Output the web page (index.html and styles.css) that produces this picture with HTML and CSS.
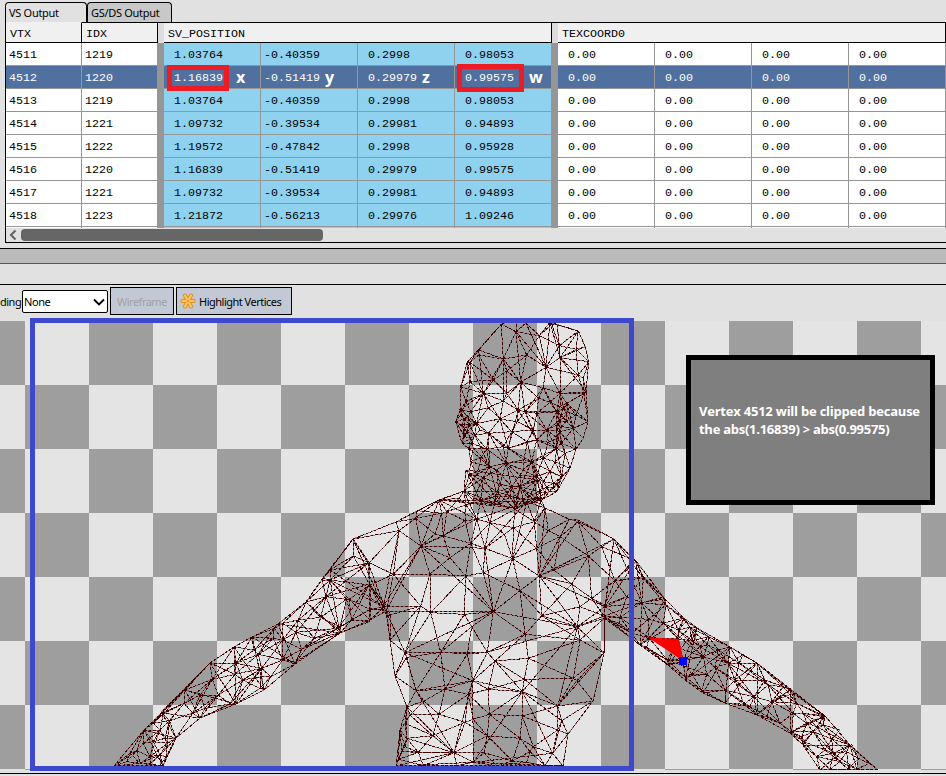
FILE: index.html
```html
<!DOCTYPE html>
<html lang="en">
<head>
<meta charset="utf-8">
<title>Mesh Output</title>
<link rel="stylesheet" href="styles.css">
</head>
<body>
<nav class="tabs"><div class="tab active">VS Output</div><div class="tab">GS/DS Output</div></nav>
<section class="table">
  <div class="row head">
    <div>VTX</div><div>IDX</div><i></i><div class="group">SV_POSITION</div><i></i><div class="group">TEXCOORD0</div>
  </div>
  <div id="rows"></div>
  <div class="scroll"><svg width="8" height="12" viewBox="0 0 8 12"><path d="M6.500 1.500 2 6l4.500 4.500" fill="none" stroke="#666" stroke-width="2.200"/></svg><div class="thumb"></div></div>
</section>
<div class="splitter"></div>
<div class="strip"></div>
<div class="toolbar">
  <span class="label">ding</span>
  <div class="select"><span>None</span><svg width="12" height="8" viewBox="0 0 12 8"><path d="M1 1.500 6 6.500 11 1.500" fill="none" stroke="#000" stroke-width="1.900"/></svg></div>
  <div class="button disabled"><span>Wireframe</span></div>
  <div class="button highlight">
    <svg width="16" height="16" viewBox="0 0 16 16"><g stroke="#df8c20" stroke-width="4" stroke-linecap="round"><path d="M2.300 8h11.400M5 2.500l6 11M11 2.500l-6 11"/></g><g stroke="#ffc65a" stroke-width="2.200" stroke-linecap="round"><path d="M2.300 8h11.400M5 2.500l6 11M11 2.500l-6 11"/></g><circle cx="8" cy="8" r="1.500" fill="#f3a22c"/></svg>
    <span>Highlight Vertices</span>
  </div>
</div>
<main class="viewport">
  <svg class="mesh" width="946" height="449" viewBox="0 321 946 449">
    <path id="shade" class="shade"/><path id="wire" class="wire"/>
    <path d="M648 637.500 679 639 683.500 661Z" fill="#f00"/><rect x="679" y="657" width="8" height="8" fill="#00f"/>
  </svg>
  <div class="frame"></div>
  <div class="note"><span>Vertex 4512 will be clipped because</span><br><span class="second">the abs(1.16839) &gt; abs(0.99575)</span></div>
</main>
<footer class="foot"></footer>
<script src="mesh.js"></script>
</body>
</html>
```
FILE: styles.css
```css
* { box-sizing: border-box; }
body { margin: 0; width: 946px; height: 776px; overflow: hidden; background: #e1e1e1; font: 11px/14px "Noto Sans", sans-serif; color: #000; display: flex; flex-direction: column; }
.tabs { height: 22px; flex: none; padding: 2px 0 0 5px; display: flex; position: relative; }
.tab { width: 82px; height: 21px; border: 1px solid #000; border-bottom: 0; border-radius: 4px 4px 0 0; padding: 3px 0 0 3px; white-space: nowrap; background: #e1e1e1; letter-spacing: -.3px; }
.tab + .tab { width: 85px; height: 20px; background: #c8c8c8; border-left-width: 1px; letter-spacing: -.3px; }
.table { height: 221px; flex: none; margin-left: 5px; border-left: 1px solid #000; border-bottom: 1px solid #000; overflow: hidden; font: 11.67px/24px "Liberation Mono", monospace; display: flex; flex-direction: column; background: #e1e1e1; }
.row { display: grid; grid-template-columns: 76px 76px 6px repeat(4, 97px) 6px repeat(4, 97px); grid-template-rows: 23px; height: 23px; flex: none; }
.row > div { border-right: 1px solid #969696; border-bottom: 1px solid #969696; padding-left: 3px; white-space: pre; background: #fff; position: relative; }
.row > i { background: #969696; }
.row > .pos { background: #8fd2ef; }
.row.selected > div { background: #5070a0; color: #fff; }
.row.head { height: 21px; grid-template-rows: 21px; }
.row.head > div { background: #f0f0f0; border-color: #000; border-top: 1px solid transparent; line-height: 22px; padding-left: 4px; }
.row.head > i { background: #dcdcdc; border-top: 1px solid #000; }
.row.head > div:nth-child(n+2) { border-top-color: #000; }
.row.head .group { grid-column: span 4; }
#rows { height: 185px; flex: none; overflow: hidden; }
.scroll { height: 14px; display: flex; gap: 4px; align-items: center; padding-left: 3px; }
.scroll svg { flex: none; }
.thumb { width: 302px; height: 12px; border-radius: 4px; background: #666; }
.mark { position: absolute; left: 3px; top: -1px; width: 62px; height: 26px; border: 5px solid #ed1c24; z-index: 1; }
.mark.wide { left: 2px; top: -2px; width: 67px; height: 28px; }
.axis { position: absolute; left: 72px; top: 0; font: bold 16px/22px "Open Sans", sans-serif; z-index: 1; }
.axis.y, .axis.z { left: 64px; }
.axis.w { left: 74px; }
.splitter { height: 16px; flex: none; margin-top: 5px; background: #bbb; border-top: 1px solid #000; border-bottom: 1px solid #555; }
.strip { height: 21px; flex: none; border-bottom: 1px solid #000; }
.toolbar { height: 36px; flex: none; display: flex; align-items: flex-start; padding-top: 2px; gap: 2px; }
.label { width: 20px; margin-top: 8px; letter-spacing: -.5px; }
.select { width: 86px; height: 23px; margin-top: 3px; border: 1px solid #000; border-radius: 2px; background: #fff; display: flex; align-items: center; justify-content: space-between; padding: 0 2px 0 1px; letter-spacing: -.4px; }
.button { height: 28px; border: 1px solid #000; background: #c3c9d4; display: flex; align-items: center; white-space: nowrap; }
.disabled { width: 64px; padding-left: 6px; color: #a0a0a0; letter-spacing: -.5px; }
.highlight { width: 116px; padding-left: 3px; gap: 3px; letter-spacing: -.5px; }
.highlight svg { flex: none; }
.button span { padding-top: 1px; }
.viewport { height: 449px; flex: none; position: relative; background: conic-gradient(#9e9e9e 25%, #e4e4e4 0 50%, #9e9e9e 0 75%, #e4e4e4 0) 25px 0 / 128px 128px; }
.mesh { display: block; }
.shade, .wire { fill: none; stroke-width: 1; shape-rendering: crispEdges; }
.shade { stroke: #705858; stroke-opacity: .75; }
.wire { stroke: #410000; stroke-dasharray: 2.500 2; }
.frame { position: absolute; left: 30px; top: -3px; width: 604px; height: 453px; border: 5px solid #3f48cc; z-index: 2; }
.note { position: absolute; left: 686px; top: 34px; width: 249px; height: 150px; border: 5px solid #000; background: #7f7f7f; color: #fff; padding: 42px 0 0 8px; font: bold 13px/18px "Open Sans", sans-serif; letter-spacing: -.22px; white-space: nowrap; }
.second { letter-spacing: -.27px; }
.foot { height: 6px; margin-top: 3px; border-top: 1px solid #000; }
```
FILE: mesh.js
```javascript
const vertices = [
  [4511, 1219, "1.03764", "-0.40359", "0.2998", "0.98053"],
  [4512, 1220, "1.16839", "-0.51419", "0.29979", "0.99575"],
  [4513, 1219, "1.03764", "-0.40359", "0.2998", "0.98053"],
  [4514, 1221, "1.09732", "-0.39534", "0.29981", "0.94893"],
  [4515, 1222, "1.19572", "-0.47842", "0.2998", "0.95928"],
  [4516, 1220, "1.16839", "-0.51419", "0.29979", "0.99575"],
  [4517, 1221, "1.09732", "-0.39534", "0.29981", "0.94893"],
  [4518, 1223, "1.21872", "-0.56213", "0.29976", "1.09246"]
];
const rowHtml = v => {
  const sel = v[0] === 4512;
  const pos = v.slice(2).map((t, k) => {
    const mark = sel && k === 0 ? '<b class="mark"></b>' : sel && k === 3 ? '<b class="mark wide"></b>' : "";
    const axis = sel ? `<span class="axis ${"xyzw"[k]}">${"xyzw"[k]}</span>` : "";
    return `<div class="pos">${t[0] === "-" ? t : " " + t}${mark}${axis}</div>`;
  }).join("");
  return `<div class="row${sel ? " selected" : ""}"><div>${v[0]}</div><div>${v[1]}</div><i></i>${pos}<i></i>${"<div> 0.00</div>".repeat(4)}</div>`;
};
document.getElementById("rows").innerHTML = vertices.map(rowHtml).join("") + '<div class="row"><div></div><div></div><i></i>' + '<div class="pos"></div>'.repeat(4) + "<i></i>" + "<div></div>".repeat(4) + "</div>";

// Each patch is stored as x,y pairs in thirds of a pixel from its origin.
const patch = (ox, oy, s) => s.trim().split(/\s+/).map(p => { const [x, y] = p.split(","); return [ox + x / 3, oy + y / 3]; });
const outline = s => s.trim().split(/\s+/).map(p => p.split(",").map(Number));

const headEdge = patch(440, 315, "184,28 228,14 258,24 330,22 352,30 415,48 436,95 446,140 438,232 444,320 430,370 408,402 390,460 350,530 310,552 330,580 250,600 75,600 0,555 72,528 88,480 92,440 86,400 66,385 47,320 60,285 62,215 82,142 116,105");
const headInner = patch(440, 315, `
228,50 258,24 335,28 298,62 116,120 90,142 190,132 260,120 358,92 408,103 318,157 360,128 200,168 90,200 160,195 242,202 310,218 415,180 430,190 432,236
360,235 130,235 200,235 78,260 145,278 190,258 235,285 290,295 296,250 330,262 380,265 350,290 382,290 408,300 440,320 180,312 110,325 92,290 68,285
232,320 255,290 146,355 215,350 280,345 120,345 74,340 104,360 100,400 190,395 262,380 290,375 320,345 352,330 378,318 352,370 350,400 400,340 325,382
125,425 140,402 205,400 198,445 252,434 310,430 345,440 375,415 148,455 110,480 130,488 180,508 170,465 215,515 240,480 250,465 288,485 275,440 365,485
330,470 310,500 300,530 240,515 290,550 210,545 165,545 122,555 180,570 230,580 260,545 340,520 100,555
62,300 72,312 66,330 84,310 88,328 80,350 92,370 74,365 96,385 360,275 372,280 362,300 370,310 356,318 366,335 358,350 350,345 364,385 355,292
300,545 315,535 328,530 340,505 355,505 320,515 280,553 295,556 250,552 230,548`);
const rim = headEdge.slice(0, 15).concat(headEdge.slice(18));
const head = rim.concat(headInner);
const headBack = rim.concat(headInner.filter((p, i) => i % 5 < 2));

const bodyEdge = outline(`466,470 464,491 439,500 396,522 353,539 330,570 322,580 306,602 278,624 252,637 234,647 210,663 185,690 162,713 144,730 114,766
163,766 176,738 200,718 236,704 264,690 295,664 340,633 370,620 386,611 390,640 395,676 407,707 400,730 396,766 563,766 568,734 593,701 604,653 604,616
640,645 668,665 685,680 703,693 725,703 757,715 790,733 803,745 820,770 878,770 850,745 825,716 790,690 757,663 730,647 697,628 684,618 665,599 636,561
614,539 578,520 545,508 541,500 538,480`);
const torso = patch(330, 480, `70,178 70,228 200,125 262,92 207,152 257,115 118,248 190,283 273,198 315,162 340,168 335,100 327,62 388,55 350,95 405,122 440,118
300,282 360,233 422,190 465,205 460,278 407,288 408,75 452,65 480,128 523,163 550,143 548,236 555,88 613,125 630,70 645,85 620,205 655,152 690,170
718,118 745,125 775,228 672,270 628,288 725,312 850,178 912,240 570,332 272,378 120,315 50,358 160,380 120,388 172,380 855,302 825,380 785,355
750,380 868,430 935,368 940,290 890,350 815,200 0,300 30,440 500,35 550,50 590,65`).concat(
patch(330, 600, `180,45 302,38 403,43 490,35 635,47 425,80 585,103 742,80 750,120 823,55 823,158 225,158 230,172 332,157 412,162 472,157
495,183 595,175 195,230 428,242 583,238 730,235 740,242 258,272 345,267 415,283 475,268 577,275 790,302 230,322 282,303 683,318 327,343 478,343
577,348 695,362 430,358 405,367 683,390 715,402 308,407 472,408 570,415 230,415 240,345 210,390 265,457 372,458 462,458 547,483 610,440 668,460
205,478 280,497 380,497 430,487 500,497 590,487 645,497 700,497 600,455 180,120 225,440 215,455 225,370`));
const leftArm = patch(100, 560, `668,55 690,60 805,10 880,42 808,72 678,110 747,118 618,128 595,180 662,172 755,180 808,150 808,185 715,205 845,148 862,165
548,190 588,217 643,235 605,268 523,205 520,235 548,240 548,300 588,305 455,232 462,270 405,263 475,283 408,310 333,310 405,343 485,325 485,350
512,350 337,358 428,360 480,385 257,388 300,405 355,405 253,430 315,445 390,432 278,460 300,473 190,462 208,482 160,490 130,512 180,510 195,535
130,550 110,572 160,545 202,550 150,590 90,580 80,605 120,610 150,612 180,585 198,590 180,617`);
const rightArm = patch(600, 540, `45,120 130,115 105,65 125,188 190,172 198,195 60,232 145,238 14,195 14,235 95,280 147,293 140,322 190,250 258,245 235,270
235,297 270,262 325,290 300,320 275,302 323,315 345,382 310,350 390,320 385,370 355,330 202,360 250,362 255,410 320,403 305,450 275,402 375,450
418,370 475,370 405,420 495,420 505,435 462,470 432,493 450,500 428,345 550,440 580,460 590,490 580,520 515,485 500,530 540,550 575,575 610,520
670,530 670,555 620,550 720,570 605,590 612,605 650,560 755,612 695,597 675,630 640,575 650,650 660,688 690,688 720,665 745,688 775,655 808,670
770,688 700,640 740,635`);
const body = bodyEdge.concat(torso, leftArm, rightArm);

function inside(x, y, poly) {
  let hit = false;
  for (let i = 0, j = poly.length - 1; i < poly.length; j = i++) {
    const [a, b] = poly[i], [c, d] = poly[j];
    if ((b > y) !== (d > y) && x < (c - a) * (y - b) / (d - b) + a) hit = !hit;
  }
  return hit;
}
function circle(p, i, j, k) {
  const [ax, ay] = p[i], [bx, by] = p[j], [cx, cy] = p[k];
  const d = 2 * (ax * (by - cy) + bx * (cy - ay) + cx * (ay - by));
  const A = ax * ax + ay * ay, B = bx * bx + by * by, C = cx * cx + cy * cy;
  const x = (A * (by - cy) + B * (cy - ay) + C * (ay - by)) / d;
  const y = (A * (cx - bx) + B * (ax - cx) + C * (bx - ax)) / d;
  return { v: [i, j, k], x, y, r: (ax - x) ** 2 + (ay - y) ** 2 };
}
// Bowyer-Watson triangulation; squash shortens distances along the given angle so facets run that way.
function edges(source, poly, squash = 1, angle = 0) {
  const pts = source.filter((p, i) => source.findIndex(q => Math.hypot(q[0] - p[0], q[1] - p[1]) < 1.5) === i);
  const c = Math.cos(angle), s = Math.sin(angle);
  const p = pts.map(([x, y], i) => [(x * c + y * s) * squash + Math.sin(i) * .01, y * c - x * s + Math.cos(i) * .01]);
  const n = p.length;
  p.push([-12000, -12000], [12000, -12000], [500, 16000]);
  let tris = [circle(p, n, n + 1, n + 2)];
  for (let i = 0; i < n; i++) {
    const border = new Map(), keep = [];
    for (const t of tris) {
      if ((p[i][0] - t.x) ** 2 + (p[i][1] - t.y) ** 2 > t.r) { keep.push(t); continue; }
      for (const [a, b] of [[0, 1], [1, 2], [2, 0]]) {
        const e = [t.v[a], t.v[b]].sort((m, q) => m - q), key = e.join();
        border.has(key) ? border.delete(key) : border.set(key, e);
      }
    }
    tris = keep;
    border.forEach(e => tris.push(circle(p, e[0], e[1], i)));
  }
  const out = [];
  for (const { v } of tris) {
    if (v.some(k => k >= n)) continue;
    for (const [a, b] of [[0, 1], [1, 2], [2, 0]]) {
      const A = pts[v[a]], B = pts[v[b]];
      const ok = [.2, .5, .8].every(t => {
        const x = A[0] + (B[0] - A[0]) * t, y = A[1] + (B[1] - A[1]) * t;
        return [[0, 0], [1.5, 0], [-1.5, 0], [0, 1.5], [0, -1.5]].some(o => inside(x + o[0], y + o[1], poly));
      });
      if (ok) out.push([A, B].sort((m, q) => m[0] - q[0] || m[1] - q[1]).map(q => q.map(w => w.toFixed(1))).join("L"));
    }
  }
  return out;
}
const lines = new Set([
  ...edges(head, headEdge),
  ...edges(headBack, headEdge, .7, 1.2),
  ...edges(body, bodyEdge),
  ...edges(bodyEdge.concat(torso.filter((p, i) => i % 4 === 0)), bodyEdge),
  ...edges(bodyEdge.filter(([x]) => x < 392).concat(leftArm.filter((p, i) => i % 3)), bodyEdge, .38, -.72),
  ...edges(bodyEdge.filter(([x]) => x > 600).concat(rightArm.filter((p, i) => i % 4)), bodyEdge, .38, .65)
]);
const d = [...lines].map(l => "M" + l).join("");
document.getElementById("shade").setAttribute("d", d);
document.getElementById("wire").setAttribute("d", d);
```
